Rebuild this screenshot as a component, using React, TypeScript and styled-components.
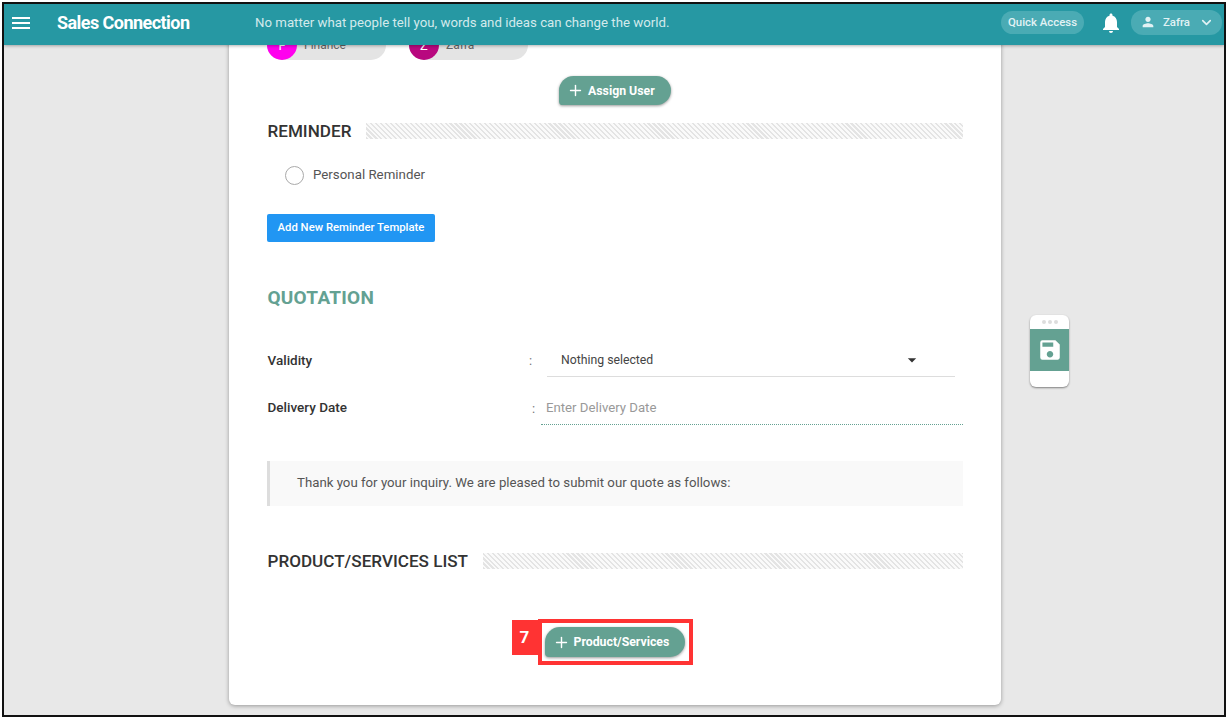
import React from "react";
import styled, { createGlobalStyle } from "styled-components";
import { Plus, ChevronDown } from "lucide-react";
import { MdMenu, MdNotifications, MdPerson, MdSave, MdArrowDropDown } from "react-icons/md";

const Global = createGlobalStyle`
  html, body { margin: 0; padding: 0; background: #fff; }
  body { font-family: Roboto, "Liberation Sans", sans-serif; }
  * { box-sizing: border-box; }
`;

const Page = styled.div`
  width: 1229px;
  height: 720px;
  padding: 2px;
  background: #fff;
  overflow: hidden;
`;

const Frame = styled.div`
  position: relative;
  height: 715px;
  width: 1224px;
  border: 2px solid #111;
  background: #e8e8e8;
  display: flex;
  flex-direction: column;
  overflow: hidden;
`;

const TopBar = styled.header`
  position: relative;
  z-index: 2;
  flex: none;
  height: 41px;
  background: #2698a3;
  box-shadow: 0 1px 3px rgba(0, 0, 0, 0.3);
  display: flex;
  align-items: center;
  color: #fff;
  padding: 0 2px 4px 5px;
`;

const Brand = styled.div`
  font-size: 18px;
  font-weight: 700;
  letter-spacing: -0.55px;
  margin-left: 24px;
  width: 198px;
`;

const Motto = styled.div`
  flex: 1;
  font-size: 13.24px;
  color: #d3eaec;
`;

const Pill = styled.div`
  height: 23px;
  padding-bottom: 1px;
  border-radius: 12px;
  background: #4aabb4;
  font-size: 11.4px;
  font-weight: 500;
  display: flex;
  align-items: center;
  color: #e2f2f4;
`;

const QuickAccess = styled(Pill)`
  width: 83px;
  justify-content: center;
  margin-right: 15px;
`;

const UserPill = styled(Pill)`
  width: 91px;
  height: 25px;
  margin-left: 8px;
  padding-left: 9px;
  gap: 7px;
`;

const Main = styled.main`
  flex: 1;
  min-height: 0;
  display: flex;
  justify-content: flex-start;
  padding-left: 225px;
`;

const Card = styled.section`
  width: 772px;
  height: 700px;
  margin-top: -40px;
  padding: 0 38px;
  background: #fff;
  border-radius: 6px;
  box-shadow: 0 1px 4px rgba(0, 0, 0, 0.35);
  flex: none;
`;

const Chips = styled.div`
  display: flex;
  gap: 23px;
  padding-top: 25px;
`;

const Chip = styled.div`
  width: 119px;
  height: 30px;
  border-radius: 15px;
  background: #e4e4e4;
  display: flex;
  align-items: center;
  font-size: 12px;
  color: #666;
`;

const ChipAvatar = styled.span<{ $color: string }>`
  width: 30px;
  height: 30px;
  border-radius: 50%;
  background: ${(p) => p.$color};
  color: #fff;
  font-size: 13px;
  display: flex;
  align-items: center;
  justify-content: center;
  margin-right: 7px;
`;

const Center = styled.div<{ $top: number }>`
  display: flex;
  justify-content: center;
  margin-top: ${(p) => p.$top}px;
`;

const RoundButton = styled.button<{ $width: number; $height: number }>`
  width: ${(p) => p.$width}px;
  height: ${(p) => p.$height}px;
  border: 0;
  border-radius: 15px 15px 15px 4px;
  background: #64a192;
  box-shadow: 0 1px 3px rgba(0, 0, 0, 0.4);
  color: #fff;
  font: 700 12.3px Roboto, sans-serif;
  display: flex;
  align-items: center;
  padding: 0 0 0 8px;
  gap: 4px;
`;

const SectionHead = styled.div<{ $top: number }>`
  display: flex;
  align-items: center;
  gap: 15px;
  margin-top: ${(p) => p.$top}px;
  height: 20px;
`;

const SectionTitle = styled.h3`
  margin: 0 0 1px 0.5px;
  font-size: 17.1px;
  font-weight: 500;
  color: #333;
  white-space: nowrap;
`;

const Hatch = styled.div`
  flex: 1;
  height: 16px;
  background: repeating-linear-gradient(45deg, #e4e4e4 0 1.5px, #fafafa 1.5px 3.5px);
`;

const RadioRow = styled.label`
  display: flex;
  align-items: center;
  margin: 24px 0 0 18px;
  height: 20px;
  font-size: 13.3px;
  color: #555;
`;

const RadioCircle = styled.span`
  width: 19px;
  height: 19px;
  border: 1.5px solid #aaa;
  border-radius: 50%;
  margin-right: 9px;
`;

const RadioText = styled.span`
  margin-bottom: 2px;
`;

const BlueButton = styled.button`
  display: block;
  width: 168px;
  height: 28px;
  margin-top: 29px;
  border: 0;
  border-radius: 2px;
  background: #2196f3;
  color: #fff;
  font: 500 11.3px Roboto, sans-serif;
  padding: 0 0 1px;
`;

const QuoteTitle = styled.h2`
  margin: 45px 0 0 0.5px;
  height: 22px;
  line-height: 22px;
  font-size: 19px;
  font-weight: 700;
  letter-spacing: 0.25px;
  color: #64a192;
`;

const FormRow = styled.div<{ $top: number }>`
  display: flex;
  align-items: center;
  height: 34px;
  margin-top: ${(p) => p.$top}px;
`;

const FieldLabel = styled.div<{ $width: number; $lift?: number }>`
  width: ${(p) => p.$width}px;
  padding: 0 0 ${(p) => p.$lift ?? 0}px 0.5px;
  font-size: 13.5px;
  font-weight: 500;
  color: #333;
`;

const Colon = styled.span<{ $width: number }>`
  width: ${(p) => p.$width}px;
  font-size: 13px;
  color: #777;
`;

const SelectBox = styled.div`
  width: 408px;
  height: 34px;
  display: flex;
  align-items: center;
  justify-content: space-between;
  padding: 0 0 0 14px;
  border-bottom: 1px solid #ddd;
  font-size: 12.25px;
  color: #444;
`;

const DateField = styled.div`
  flex: 1;
  height: 34px;
  display: flex;
  align-items: center;
  padding-left: 5px;
  border-bottom: 1px dotted #64a192;
  font-size: 13.2px;
  color: #999;
`;

const Note = styled.blockquote`
  margin: 36px 0 0;
  height: 45px;
  display: flex;
  align-items: center;
  padding: 0 0 3px 27px;
  background: #f9f9f9;
  border-left: 3px solid #ddd;
  font-size: 13.24px;
  color: #555;
`;

const Marked = styled.div`
  position: relative;
  width: 155px;
  height: 46px;
  border: 4px solid #ff3333;
  display: flex;
  align-items: center;
  padding-left: 3px;
`;

const MarkNumber = styled.span`
  position: absolute;
  left: -30px;
  top: -3px;
  width: 26px;
  height: 35px;
  padding-bottom: 2px;
  background: #ff3333;
  color: #fff;
  font-size: 17px;
  font-weight: 700;
  display: flex;
  align-items: center;
  justify-content: center;
`;

const SaveDock = styled.aside`
  position: absolute;
  left: 1026px;
  top: 311px;
  width: 39px;
  height: 72px;
  border-radius: 6px;
  background: #fff;
  box-shadow: 0 1px 2px rgba(0, 0, 0, 0.45);
  display: flex;
  flex-direction: column;
  align-items: center;
`;

const Dots = styled.div`
  height: 14px;
  display: flex;
  align-items: center;
  gap: 2px;
`;

const Dot = styled.span`
  width: 4px;
  height: 4px;
  border-radius: 50%;
  background: #ddd;
`;

const SaveSquare = styled.div`
  width: 100%;
  height: 42px;
  background: #64a192;
  color: #fff;
  display: flex;
  align-items: center;
  justify-content: center;
`;

export default function App() {
  return (
    <Page>
      <Global />
      <Frame>
        <TopBar>
          <MdMenu size={24} />
          <Brand>Sales Connection</Brand>
          <Motto>No matter what people tell you, words and ideas can change the world.</Motto>
          <QuickAccess>Quick Access</QuickAccess>
          <MdNotifications size={24} />
          <UserPill>
            <MdPerson size={16} />
            <span>Zafra</span>
            <ChevronDown size={15} strokeWidth={2.6} style={{ marginLeft: 2 }} />
          </UserPill>
        </TopBar>
        <Main>
          <Card>
            <Chips>
              <Chip>
                <ChipAvatar $color="#ff00ee">F</ChipAvatar>
                Finance
              </Chip>
              <Chip>
                <ChipAvatar $color="#b8087f">Z</ChipAvatar>
                Zafra
              </Chip>
            </Chips>
            <Center $top={16}>
              <RoundButton $width={112} $height={29}>
                <Plus size={17} />
                Assign User
              </RoundButton>
            </Center>
            <SectionHead $top={16}>
              <SectionTitle>REMINDER</SectionTitle>
              <Hatch />
            </SectionHead>
            <RadioRow>
              <RadioCircle />
              <RadioText>Personal Reminder</RadioText>
            </RadioRow>
            <BlueButton>Add New Reminder Template</BlueButton>
            <QuoteTitle>QUOTATION</QuoteTitle>
            <FormRow $top={34}>
              <FieldLabel $width={262}>Validity</FieldLabel>
              <Colon $width={18}>:</Colon>
              <SelectBox>
                Nothing selected
                <MdArrowDropDown size={20} style={{ marginRight: 33, color: "#333" }} />
              </SelectBox>
            </FormRow>
            <FormRow $top={14}>
              <FieldLabel $width={265} $lift={2}>Delivery Date</FieldLabel>
              <Colon $width={9}>:</Colon>
              <DateField>Enter Delivery Date</DateField>
            </FormRow>
            <Note>Thank you for your inquiry. We are pleased to submit our quote as follows:</Note>
            <SectionHead $top={45}>
              <SectionTitle>PRODUCT/SERVICES LIST</SectionTitle>
              <Hatch />
            </SectionHead>
            <Center $top={48}>
              <Marked>
                <MarkNumber>7</MarkNumber>
                <RoundButton $width={140} $height={30}>
                  <Plus size={17} />
                  Product/Services
                </RoundButton>
              </Marked>
            </Center>
          </Card>
        </Main>
        <SaveDock>
          <Dots>
            <Dot />
            <Dot />
            <Dot />
          </Dots>
          <SaveSquare>
            <MdSave size={26} />
          </SaveSquare>
        </SaveDock>
      </Frame>
    </Page>
  );
}
